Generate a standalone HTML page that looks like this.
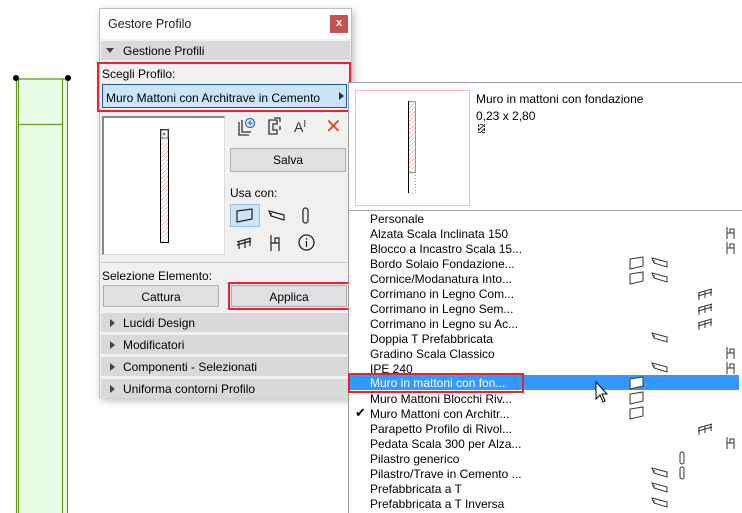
<!DOCTYPE html>
<html><head><meta charset="utf-8"><style>
*{margin:0;padding:0;box-sizing:border-box}
body{width:742px;height:513px;background:#fff;position:relative;overflow:hidden;font-family:"Liberation Sans",sans-serif;font-size:12px;color:#000}
.a{position:absolute}
.t{position:absolute;white-space:nowrap}
.btn{position:absolute;background:#e1e1e1;border:1px solid #adadad;text-align:center;line-height:20px}
.sec{position:absolute;left:101px;width:249px;height:19px;background:#d9d9d9;line-height:21px;padding-left:22px}
.sec::before{content:"";position:absolute;left:9px;top:6px;border-left:5px solid #444;border-top:4px solid transparent;border-bottom:4px solid transparent}
.row{position:absolute;left:349px;width:390px;height:15px;line-height:17px;padding-left:21px}
svg.i{position:absolute;overflow:visible}
</style></head><body>
<svg width="742" height="513" class="a" style="left:0;top:0">
<rect x="16" y="78" width="52" height="440" fill="#e8fce6"/>
<g stroke="#6a9a1a" stroke-width="1.2" fill="none">
<line x1="16.5" y1="78" x2="16.5" y2="513"/><line x1="18.5" y1="78" x2="18.5" y2="513"/>
<line x1="62.5" y1="78" x2="62.5" y2="513"/><line x1="67.5" y1="78" x2="67.5" y2="513"/>
<line x1="16" y1="79" x2="68" y2="79"/><line x1="18" y1="124.5" x2="62" y2="124.5"/>
</g>
<circle cx="16" cy="78" r="3" fill="#000"/><circle cx="68" cy="78" r="3" fill="#000"/>
</svg>

<div class="a" style="left:99px;top:8px;width:253px;height:390px;background:#f0f0f0;border:1px solid #bfbfbf;box-shadow:2px 3px 8px rgba(0,0,0,.25)"></div>
<div class="a" style="left:100px;top:9px;width:251px;height:30px;background:#fff"></div>
<div class="t" style="left:108px;top:17px;font-size:12.5px;color:#222">Gestore Profilo</div>
<div class="a" style="left:330px;top:15px;width:18px;height:18px;background:#c75050;color:#fff;text-align:center;line-height:17px;font-size:11px;font-weight:bold">x</div>
<div class="sec" style="top:41px;">Gestione Profili</div>
<div class="a" style="left:101px;top:41px;width:20px;height:18px;background:#d9d9d9"></div>
<div class="a" style="left:106px;top:48px;border-top:5px solid #444;border-left:4px solid transparent;border-right:4px solid transparent"></div>
<div class="a" style="left:97px;top:62px;width:254px;height:50px;border:2px solid #e8232a"></div>
<div class="t" style="left:102px;top:67px">Scegli Profilo:</div>
<div class="a" style="left:102px;top:84px;width:245px;height:24px;background:#cce4f7;border:1px solid #1a5a96"></div>
<div class="t" style="left:106px;top:91px">Muro Mattoni con Architrave in Cemento</div>
<div class="a" style="left:339px;top:92px;border-left:5px solid #333;border-top:4px solid transparent;border-bottom:4px solid transparent"></div>

<div class="a" style="left:102px;top:116px;width:123px;height:139px;background:#fff;border:1px solid #ddd;border-top:2px solid #888;border-left:2px solid #888"></div>
<svg class="i" style="left:160px;top:129px" width="12" height="118">
<defs><pattern id="h" width="3" height="3" patternUnits="userSpaceOnUse" patternTransform="rotate(45)"><line x1="0" y1="0" x2="0" y2="3" stroke="#f08080" stroke-width="1"/></pattern></defs>
<rect x="0.5" y="0.5" width="8" height="113" fill="url(#h)" stroke="#000"/><rect x="1" y="1" width="7" height="8" fill="#fff" stroke="#666"/><circle cx="4" cy="5" r="1.5" fill="#6a6"/></svg>

<svg class="i" style="left:236px;top:117px" width="20" height="20" fill="none" stroke="#333" stroke-width="1.3"><path d="M3 5v13h10M6 3v12h9"/><circle cx="14" cy="6" r="4.5" stroke="#2a7ad5"/><path d="M14 3.5v5M11.5 6h5" stroke="#2a7ad5"/></svg>
<svg class="i" style="left:266px;top:117px" width="20" height="20" fill="none" stroke="#333" stroke-width="1.3"><path d="M3 3h8v4h-4v6h4v4h-8zM8 1h6v4M14 9v4"/></svg>
<div class="t" style="left:294px;top:119px;font-size:14px;color:#333">A<span style="font-size:10px;vertical-align:top">I</span></div>
<div class="t" style="left:325px;top:114px;font-size:20px;color:#e74c2b">✕</div>

<div class="btn" style="left:230px;top:148px;width:116px;height:24px;line-height:23px">Salva</div>
<div class="t" style="left:230px;top:186px">Usa con:</div>
<div class="a" style="left:230px;top:204px;width:30px;height:23px;background:#cce4f7;border:1px solid #99c3e8"></div>
<svg class="i" style="left:236px;top:208px" width="20" height="16" fill="none" stroke="#222" stroke-width="1.2"><path d="M1 3L16 1V11L1 14Z"/></svg>
<svg class="i" style="left:268px;top:209px" width="20" height="16" fill="none" stroke="#222" stroke-width="1.2"><path d="M1 2L16 6V11L3 7ZM3 4v3"/></svg>
<svg class="i" style="left:302px;top:207px" width="10" height="18" fill="none" stroke="#222" stroke-width="1.2"><rect x="1" y="1" width="5" height="15" rx="2.5"/></svg>
<svg class="i" style="left:236px;top:236px" width="20" height="14" fill="none" stroke="#222" stroke-width="1.2"><path d="M1 6L15 2M1 9L15 5M3 5v8M9 4v8M14 2v8"/></svg>
<svg class="i" style="left:268px;top:234px" width="14" height="18" fill="none" stroke="#222" stroke-width="1.2"><path d="M3 1v16M3 9h8v8M7 9V4h4v5"/></svg>
<svg class="i" style="left:298px;top:234px" width="18" height="18" fill="none" stroke="#222" stroke-width="1.3"><circle cx="8.5" cy="8.5" r="7.5"/><path d="M8.5 7v6M8.5 4v1.5"/></svg>

<div class="a" style="left:101px;top:262px;width:249px;border-top:1px solid #c8c8c8"></div>
<div class="t" style="left:102px;top:269px">Selezione Elemento:</div>
<div class="btn" style="left:103px;top:285px;width:116px;height:22px;line-height:22px">Cattura</div>
<div class="a" style="left:228px;top:282px;width:123px;height:28px;border:2px solid #e8232a"></div>
<div class="btn" style="left:231px;top:285px;width:116px;height:22px;line-height:22px">Applica</div>
<div class="sec" style="top:313px">Lucidi Design</div>
<div class="sec" style="top:335px">Modificatori</div>
<div class="sec" style="top:357px">Componenti - Selezionati</div>
<div class="sec" style="top:379px">Uniforma contorni Profilo</div>

<div class="a" style="left:348px;top:82px;width:394px;height:431px;background:#fff;border-left:1px solid #999;border-top:1px solid #999"></div>
<div class="a" style="left:355px;top:90px;width:115px;height:116px;border:1px solid #fbb"></div>
<svg class="i" style="left:408px;top:101px" width="12" height="94"><rect x="0.5" y="0.5" width="7" height="71" fill="url(#h)" stroke="#999"/><rect x="0.5" y="72" width="7" height="20" fill="#fff" stroke="#6a6" stroke-dasharray="1 2"/><line x1="0.5" y1="0" x2="0.5" y2="92" stroke="#000"/></svg>
<div class="t" style="left:476px;top:92px">Muro in mattoni con fondazione</div>
<div class="t" style="left:476px;top:109px">0,23 x 2,80</div>
<div class="a" style="left:478px;top:124px;width:7px;height:9px;border:1px dotted #333;background:repeating-linear-gradient(135deg,#333 0 1px,#fff 1px 3px)"></div>
<div class="a" style="left:349px;top:210px;width:393px;border-top:1px solid #aaa"></div>
<div class="a" style="left:349px;top:375px;width:390px;height:15px;background:#3399ff"></div>
<div class="a" style="left:348px;top:373px;width:176px;height:20px;border:2px solid #e8232a"></div>

<div class="row" style="top:211px">Personale</div>
<div class="row" style="top:226px">Alzata Scala Inclinata 150</div>
<div class="row" style="top:241px">Blocco a Incastro Scala 15...</div>
<div class="row" style="top:256px">Bordo Solaio Fondazione...</div>
<div class="row" style="top:271px">Cornice/Modanatura Into...</div>
<div class="row" style="top:286px">Corrimano in Legno Com...</div>
<div class="row" style="top:301px">Corrimano in Legno Sem...</div>
<div class="row" style="top:316px">Corrimano in Legno su Ac...</div>
<div class="row" style="top:331px">Doppia T Prefabbricata</div>
<div class="row" style="top:346px">Gradino Scala Classico</div>
<div class="row" style="top:361px">IPE 240</div>
<div class="row" style="top:375px;color:#fff;line-height:16px">Muro in mattoni con fon...</div>
<div class="row" style="top:391px">Muro Mattoni Blocchi Riv...</div>
<div class="row" style="top:406px">Muro Mattoni con Architr...</div>
<div class="t" style="left:355px;top:405px;font-size:13px">✔</div>
<div class="row" style="top:421px">Parapetto Profilo di Rivol...</div>
<div class="row" style="top:436px">Pedata Scala 300 per Alza...</div>
<div class="row" style="top:451px">Pilastro generico</div>
<div class="row" style="top:466px">Pilastro/Trave in Cemento ...</div>
<div class="row" style="top:481px">Prefabbricata a T</div>
<div class="row" style="top:496px">Prefabbricata a T Inversa</div>

<svg class="a" style="left:0;top:0" width="742" height="513" fill="none" stroke="#333" stroke-width="1">
<defs>
<g id="sl"><path d="M0 2L13 0V9L0 12Z" fill="#fff"/></g>
<g id="bm"><path d="M0 1L15 5V10L2 6Z M2 3v3"/></g>
<g id="cl"><rect x="0" y="0" width="4" height="12" rx="2"/></g>
<g id="rl"><path d="M0 5L14 1M0 8L14 4M1 5v7M7 3v7M13 1v7"/></g>
<g id="st"><path d="M2 0v12M2 6h7v6M5 6V2h4v4"/></g>
</defs>
<use href="#st" x="725" y="227"/><use href="#st" x="725" y="242"/>
<use href="#sl" x="630" y="257"/><use href="#bm" x="652" y="257"/>
<use href="#sl" x="630" y="272"/><use href="#bm" x="652" y="272"/>
<use href="#rl" x="698" y="288"/><use href="#rl" x="698" y="303"/><use href="#rl" x="698" y="318"/>
<use href="#bm" x="652" y="332"/>
<use href="#st" x="725" y="347"/><use href="#bm" x="652" y="362"/><use href="#st" x="725" y="362"/>
<use href="#sl" x="630" y="377"/><use href="#sl" x="630" y="392"/><use href="#sl" x="630" y="407"/>
<use href="#rl" x="698" y="423"/><use href="#st" x="725" y="437"/>
<use href="#cl" x="680" y="452"/><use href="#bm" x="652" y="467"/><use href="#cl" x="680" y="467"/>
<use href="#bm" x="652" y="482"/><use href="#bm" x="652" y="497"/>
<path d="M596 382v17l4-4 3 7 2-1-3-7h5z" fill="#fff" stroke="#000"/>
</svg>
</body></html>
